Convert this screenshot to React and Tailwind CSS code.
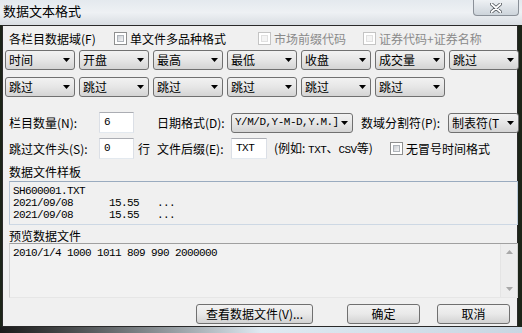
import React from "react";

const font = { fontFamily: '"Noto Sans CJK SC", "Noto Sans", sans-serif' };
const mono = { fontFamily: '"Liberation Mono", "Noto Sans CJK SC", monospace' };

// 下拉框 (Win7 风格)
function Combo({ text, w = "w-[70px]", isMono = false }) {
  return (
    <div
      className={`${w} h-[20px] shrink-0 flex items-center justify-between rounded-[3px] border border-[#707070] bg-gradient-to-b from-[#f2f2f2] via-[#e6e6e6] to-[#d4d4d4] pl-[3px] pr-[4px] text-[12px] leading-none text-black`}
    >
      <span className={isMono ? "text-[11px] tracking-[-0.5px] whitespace-nowrap" : "whitespace-nowrap"} style={isMono ? mono : undefined}>
        {text}
      </span>
      <svg width="7" height="4" viewBox="0 0 7 4" className="shrink-0">
        <path d="M0 0h7L3.5 4z" fill="#000" />
      </svg>
    </div>
  );
}

function Check({ label, disabled = false }) {
  return (
    <div className="flex items-center gap-[3px]">
      <div
        className={`w-[13px] h-[13px] border ${disabled ? "border-[#c4c4c4]" : "border-[#8e8f8f]"} bg-white p-[2px]`}
      >
        <div
          className={`w-full h-full ${disabled ? "bg-[#f4f4f4] border border-[#e0e0e0]" : "bg-gradient-to-br from-[#cbcfd5] to-[#f6f6f6] border border-[#aeb3b9]"}`}
        ></div>
      </div>
      <span className={`text-[12px] leading-none ${disabled ? "text-[#8a8a8a]" : "text-black"}`}>{label}</span>
    </div>
  );
}

function Edit({ text, w = "w-[35px]" }) {
  return (
    <div
      className={`${w} h-[21px] shrink-0 flex items-center bg-white border border-t-[#abadb3] border-x-[#dbdfe6] border-b-[#e3e9ef] pl-[4px] text-[11px] tracking-[-0.5px] text-black`}
      style={mono}
    >
      {text}
    </div>
  );
}

function Button({ text, w }) {
  return (
    <div
      className={`${w} h-[20px] flex items-center justify-center rounded-[3px] border border-[#707070] bg-gradient-to-b from-[#f2f2f2] via-[#e9e9e9] to-[#d2d2d2] text-[12px] leading-none text-black`}
    >
      {text}
    </div>
  );
}

export default function App() {
  const row1 = ["时间", "开盘", "最高", "最低", "收盘", "成交量", "跳过"];
  const row2 = ["跳过", "跳过", "跳过", "跳过", "跳过", "跳过"];

  return (
    <div className="w-[522px] h-[333px] overflow-hidden flex flex-col bg-[#1c2418]" style={font}>
      {/* 标题栏 */}
      <div className="h-[25px] shrink-0 flex items-start justify-between bg-gradient-to-b from-[#e4e9ee] via-[#eef1f4] to-[#d9dee3]">
        <div className="pl-[3px] pt-[3px] text-[13px] leading-[15px] text-black">数据文本格式</div>
        <div className="mr-[3px] w-[46px] h-[16px] rounded-b-[4px] border border-t-0 border-[#8a9098] bg-gradient-to-b from-[#eef1f4] to-[#cdd4db] flex items-center justify-center">
          <svg width="12" height="10" viewBox="0 0 12 10">
            <path d="M1.5 1 L10.5 9 M10.5 1 L1.5 9" stroke="#4a4f55" strokeWidth="3.4" strokeLinecap="round" />
            <path d="M1.5 1 L10.5 9 M10.5 1 L1.5 9" stroke="#ffffff" strokeWidth="1.8" strokeLinecap="round" />
          </svg>
        </div>
      </div>

      {/* 客户区 */}
      <div className="flex-1 flex ml-[2px] mr-[4px] border border-[#2a2a2a] bg-[#f0f0f0]">
        <div className="flex-1 flex flex-col pl-[1px]">
          {/* 第一行 */}
          <div className="h-[15px] mt-[5px] flex items-center pl-[5px] text-[12px] leading-none">
            <span className="w-[105px]">各栏目数据域(F)</span>
            <div className="w-[144px]">
              <Check label="单文件多品种格式" />
            </div>
            <div className="w-[105px]">
              <Check label="市场前缀代码" disabled />
            </div>
            <Check label="证券代码+证券名称" disabled />
          </div>

          {/* 字段下拉框 */}
          <div className="mt-[4px] flex gap-[4px] pl-[1px]">
            {row1.map((t, i) => (
              <Combo key={i} text={t} />
            ))}
          </div>
          <div className="mt-[7px] flex gap-[4px] pl-[1px]">
            {row2.map((t, i) => (
              <Combo key={i} text={t} />
            ))}
          </div>

          {/* 参数行 */}
          <div className="mt-[15px] h-[21px] flex items-center pl-[5px] text-[12px] leading-none">
            <span className="w-[90px]">栏目数量(N):</span>
            <Edit text="6" />
            <span className="ml-[23px] w-[74px]">日期格式(D):</span>
            <Combo text="Y/M/D,Y-M-D,Y.M.]" w="w-[122px]" isMono />
            <span className="ml-[8px] w-[87px]">数域分割符(P):</span>
            <Combo text="制表符(T" w="w-[71px]" />
          </div>
          <div className="mt-[5px] h-[21px] flex items-center pl-[5px] text-[12px] leading-none">
            <span className="w-[90px]">跳过文件头(S):</span>
            <Edit text="0" />
            <span className="ml-[4px] w-[19px]">行</span>
            <span className="w-[74px]">文件后缀(E):</span>
            <Edit text="TXT" w="w-[36px]" />
            <span className="ml-[7px] w-[116px]">
              (例如: <span style={mono} className="text-[11px] tracking-[-0.5px]">TXT</span>、<span style={mono} className="text-[11px] tracking-[-0.5px]">CSV</span>等)
            </span>
            <Check label="无冒号时间格式" />
          </div>

          {/* 样板 */}
          <div className="mt-[5px] pl-[5px] text-[12px] leading-[15px]">数据文件样板</div>
          <div
            className="mt-[2px] ml-[5px] mr-[1px] h-[44px] border border-t-[#9aabbf] border-x-[#b9c8d8] border-b-[#cdd8e4] bg-[#f0f0f0] pl-[3px] pt-[3px] text-[11px] leading-[12px] tracking-[-0.6px] text-black whitespace-pre"
            style={mono}
          >
            <div>SH600001.TXT</div>
            <div>{"2021/09/08      15.55   ..."}</div>
            <div>{"2021/09/08      15.55   ..."}</div>
          </div>

          {/* 预览 */}
          <div className="mt-[3px] pl-[5px] text-[12px] leading-[15px]">预览数据文件</div>
          <div className="ml-[5px] mr-[1px] h-[55px] flex border border-t-[#a0a0a0] border-x-[#d0d0d0] border-b-[#e6e6e6] bg-[#f2f2f2]">
            <div className="flex-1 pl-[3px] pt-[3px] text-[11px] leading-[12px] tracking-[-0.6px] text-black whitespace-pre" style={mono}>
              2010/1/4 1000 1011 809 990 2000000
            </div>
            <div className="w-[17px] flex flex-col justify-between items-center py-[6px] bg-[#ededed] border-l border-[#e4e4e4]">
              <svg width="7" height="4" viewBox="0 0 7 4">
                <path d="M0 4h7L3.5 0z" fill="#a8a8a8" />
              </svg>
              <svg width="7" height="4" viewBox="0 0 7 4">
                <path d="M0 0h7L3.5 4z" fill="#a8a8a8" />
              </svg>
            </div>
          </div>

          {/* 按钮 */}
          <div className="mt-[6px] flex pl-[192px]">
            <Button text="查看数据文件(V)..." w="w-[117px]" />
            <div className="ml-[34px]">
              <Button text="确定" w="w-[73px]" />
            </div>
            <div className="ml-[17px]">
              <Button text="取消" w="w-[73px]" />
            </div>
          </div>
        </div>
      </div>

      {/* 底部玻璃边 */}
      <div className="h-[6px] shrink-0 bg-gradient-to-r from-[#1b1b1b] via-[#dfeaf2] to-[#c8d6e2]"></div>
    </div>
  );
}
